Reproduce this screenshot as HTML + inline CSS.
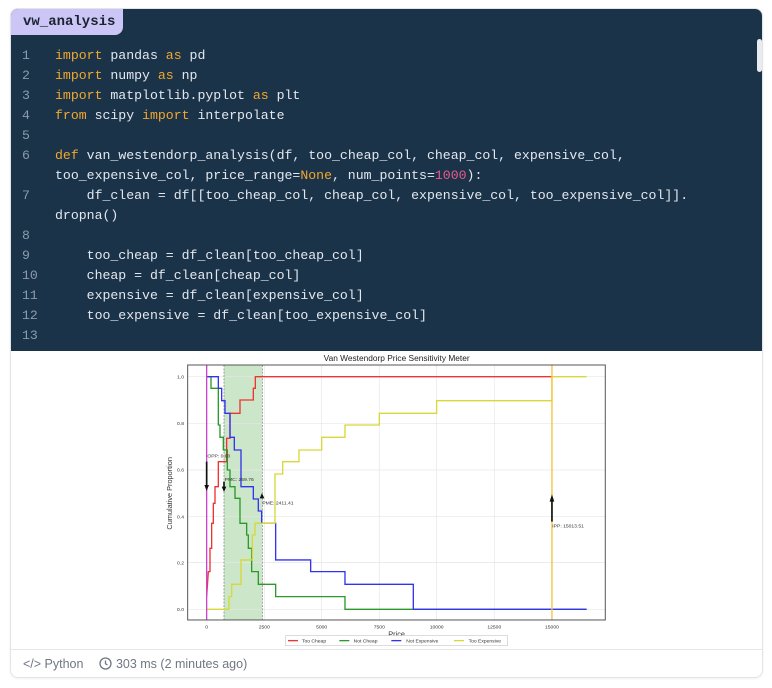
<!DOCTYPE html>
<html><head><meta charset="utf-8"><style>
body{margin:0;background:#fff;width:772px;height:688px;position:relative;overflow:hidden;font-family:"Liberation Sans",sans-serif}
.card{position:absolute;left:10px;top:8px;width:751px;height:668px;border:1px solid #e2e4e8;border-radius:8px;overflow:hidden;box-shadow:0 1px 2px rgba(0,0,0,.06)}
.code{position:absolute;left:0;top:0;width:752px;height:342px;background:#1b3349}
.tab{position:absolute;left:0;top:0;width:112px;height:26px;background:#cbc6f6;border-bottom-right-radius:8px;color:#1b2230;font:bold 14px "Liberation Mono",monospace;line-height:26px;text-indent:12px}
pre{position:absolute;left:0;top:37px;margin:0;font:13.2px/20px "Liberation Mono",monospace;color:#e3e8ef}
.ln{display:inline-block;width:44px;text-indent:11px;color:#8b9bab}
.k{color:#f2a72e}.n{color:#f2a72e}.m{color:#ea5a8a}
.sb{position:absolute;left:746px;top:30px;width:5px;height:33px;background:#e8ecf0;border-radius:3px}
.foot{position:absolute;left:0;top:640px;width:752px;height:28px;border-top:1px solid #e4e6ea;color:#707782;font-size:12.5px;line-height:28px}
.foot svg{vertical-align:-2px}
</style></head><body>
<div class="card">
<div class="code">
<div class="tab">vw_analysis</div>
<div class="sb"></div>
<pre><span class="ln">1</span><span class="k">import</span> pandas <span class="k">as</span> pd
<span class="ln">2</span><span class="k">import</span> numpy <span class="k">as</span> np
<span class="ln">3</span><span class="k">import</span> matplotlib.pyplot <span class="k">as</span> plt
<span class="ln">4</span><span class="k">from</span> scipy <span class="k">import</span> interpolate
<span class="ln">5</span>
<span class="ln">6</span><span class="k">def</span> van_westendorp_analysis(df, too_cheap_col, cheap_col, expensive_col,
<span class="ln"></span>too_expensive_col, price_range=<span class="n">None</span>, num_points=<span class="m">1000</span>):
<span class="ln">7</span>    df_clean = df[[too_cheap_col, cheap_col, expensive_col, too_expensive_col]].
<span class="ln"></span>dropna()
<span class="ln">8</span>
<span class="ln">9</span>    too_cheap = df_clean[too_cheap_col]
<span class="ln">10</span>    cheap = df_clean[cheap_col]
<span class="ln">11</span>    expensive = df_clean[expensive_col]
<span class="ln">12</span>    too_expensive = df_clean[too_expensive_col]
<span class="ln">13</span></pre>
</div>
<div class="foot"><span style="margin-left:12px">&lt;/&gt; Python</span><span style="margin-left:16px"><svg width="13" height="13" viewBox="0 0 13 13"><circle cx="6.5" cy="6.5" r="5.5" fill="none" stroke="#707782" stroke-width="1.3"/><path d="M6.5 3.5V6.8L8.5 8" fill="none" stroke="#707782" stroke-width="1.3"/></svg> 303 ms (2 minutes ago)</span></div>
</div>
<svg style="position:absolute;left:0;top:0" width="772" height="688">
<g transform="translate(150,350) scale(0.3333)" font-family="Liberation Sans,sans-serif">
<text x="740" y="33" font-size="25" text-anchor="middle" fill="#222">Van Westendorp Price Sensitivity Meter</text>
<rect x="222" y="45" width="115" height="765" fill="#a9d5a4" opacity="0.6"/>
<g stroke="#e6e6e6" stroke-width="2">
<path d="M113 80H1366M113 220H1366M113 360H1366M113 500H1366M113 638H1366M113 778H1366M170 45V810M343 45V810M515 45V810M688 45V810M860 45V810M1033 45V810M1206 45V810"/>
</g>
<path d="M222 45V810M337 45V810" stroke="#777" stroke-width="2" stroke-dasharray="6,4"/>
<g fill="none" stroke-width="4">
<path stroke="#ee3333" d="M170 740L175 665H180V595H185V520H190V460H195V410H205V335H230V265H240V190H270V150H310V115H316V80H1206"/>
<path stroke="#2a9a2a" d="M170 80H183V115H205V225H210V262H220V300H232V360H240V410H255V445H270V520H290V555H295V595H305V665H325V703H377V740H585V778H1310"/>
<path stroke="#3333ee" d="M170 80H205V115H215V152H225V190H240V262H253V300H273V410H310V447H325V483H335V520H377V630H482V665H585V703H790V778H1310"/>
<path stroke="#d8d83a" d="M170 778H237V740H245V703H273V630H307V555H315V520H375V372H398V335H447V300H515V262H585V225H688V190H860V152H1206V80H1310"/>
<path stroke="#cc44cc" d="M170 45V810"/>
<path stroke="#f5c040" d="M1206 45V810"/>
</g>
<rect x="113" y="45" width="1253" height="765" fill="none" stroke="#555" stroke-width="3"/>
<g stroke="#111" stroke-width="5"><path d="M170 335V405M222 395V412M336 445V438M1206 515V450"/></g>
<g fill="#111"><path d="M163 405h14l-7 18zM215 410h14l-7 16zM329 445h14l-7-16zM1199 455h14l-7-22z"/></g>
<g font-size="15" fill="#333">
<text x="172" y="323">OPP: 0.00</text><text x="224" y="393">PMC: 259.76</text><text x="337" y="463">PME: 2411.41</text><text x="1207" y="533">IPP: 15013.51</text>
</g>
<g font-size="15" fill="#333" text-anchor="end">
<text x="102" y="85">1.0</text><text x="102" y="225">0.8</text><text x="102" y="365">0.6</text><text x="102" y="505">0.4</text><text x="102" y="643">0.2</text><text x="102" y="783">0.0</text>
</g>
<g font-size="15" fill="#333" text-anchor="middle">
<text x="170" y="836">0</text><text x="343" y="836">2500</text><text x="515" y="836">5000</text><text x="688" y="836">7500</text><text x="860" y="836">10000</text><text x="1033" y="836">12500</text><text x="1206" y="836">15000</text>
<text x="740" y="860" font-size="22">Price</text>
</g>
<text transform="translate(66,430) rotate(-90)" font-size="22" text-anchor="middle" fill="#333">Cumulative Proportion</text>
<rect x="406" y="857" width="667" height="30" fill="#fff" stroke="#ccc" stroke-width="2"/>
<g stroke-width="4"><path stroke="#ee3333" d="M414 872H444"/><path stroke="#2a9a2a" d="M568 872H598"/><path stroke="#3333ee" d="M724 872H754"/><path stroke="#d8d83a" d="M912 872H942"/></g>
<g font-size="15" fill="#333"><text x="456" y="877">Too Cheap</text><text x="611" y="877">Not Cheap</text><text x="769" y="877">Not Expensive</text><text x="956" y="877">Too Expensive</text></g>
</g>
</svg>
</body></html>
